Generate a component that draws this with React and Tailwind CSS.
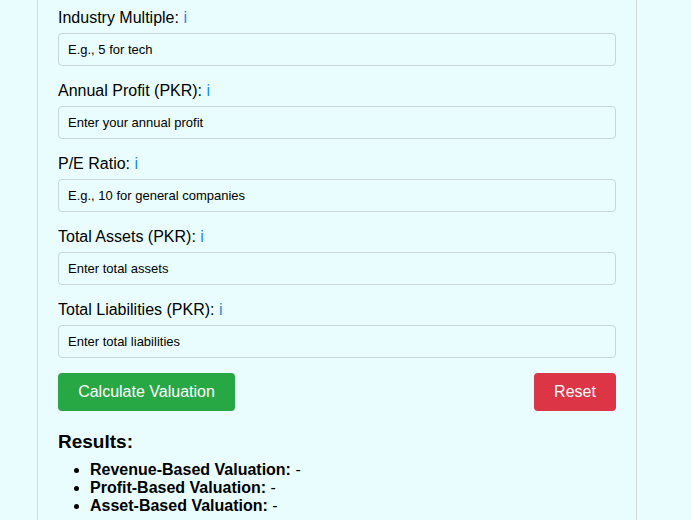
export default function App() {
  const fields = [
    ["Industry Multiple:", "E.g., 5 for tech"],
    ["Annual Profit (PKR):", "Enter your annual profit"],
    ["P/E Ratio:", "E.g., 10 for general companies"],
    ["Total Assets (PKR):", "Enter total assets"],
    ["Total Liabilities (PKR):", "Enter total liabilities"],
  ];
  return (
    <div className="w-[691px] h-[520px] overflow-hidden bg-[#e9fdfe] text-black" style={{ fontFamily: '"Liberation Sans", Arial, sans-serif' }}>
      <div className="ml-[37px] w-[600px] h-[520px] border-x border-[#d6dcdc] px-[20px] pt-[8px]">
        {fields.map(([l, p]) => (
          <div key={l} className="mb-[15px]">
            <div className="text-[16px] leading-[20px] mb-[5px]">{l} <span className="text-[#1e88e5]">i</span></div>
            <div className="h-[33px] border border-[#c8d6dc] rounded-[4px] px-[9px] flex items-center text-[13px]">{p}</div>
          </div>
        ))}
        <div className="flex justify-between">
          <button className="h-[38px] w-[177px] bg-[#28a745] text-white text-[16px] rounded-[4px]">Calculate Valuation</button>
          <button className="h-[38px] w-[82px] bg-[#dc3545] text-white text-[16px] rounded-[4px]">Reset</button>
        </div>
        <div className="mt-[19px] text-[19px] font-bold leading-[23px]">Results:</div>
        <ul className="list-disc pl-[32px] mt-[8px] text-[16px] leading-[18px]">
          <li><b>Revenue-Based Valuation:</b> -</li>
          <li><b>Profit-Based Valuation:</b> -</li>
          <li><b>Asset-Based Valuation:</b> -</li>
        </ul>
      </div>
    </div>
  );
}
